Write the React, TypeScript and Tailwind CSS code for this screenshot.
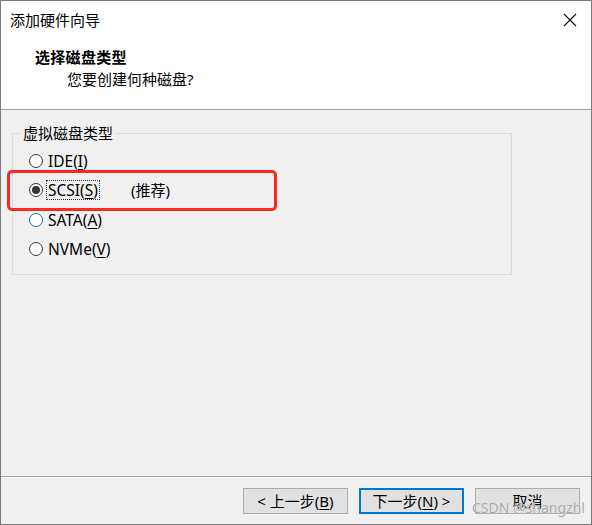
import React from "react";

const font = "font-['Segoe_UI','Noto_Sans','Noto_Sans_CJK_SC',sans-serif]";

function Radio({ checked, hover }: { checked?: boolean; hover?: boolean }) {
  return (
    <span
      className={`flex h-[14px] w-[14px] shrink-0 items-center justify-center rounded-full border bg-white ${
        hover ? "border-[#0078d7]" : "border-[#333333]"
      }`}
    >
      {checked && <span className="h-[8px] w-[8px] rounded-full bg-[#333333]" />}
    </span>
  );
}

function Option({
  label,
  hotkey,
  rest,
  checked,
  hover,
  focused,
  note,
}: {
  label: string;
  hotkey: string;
  rest: string;
  checked?: boolean;
  hover?: boolean;
  focused?: boolean;
  note?: string;
}) {
  return (
    <div className="flex h-[29.5px] items-center">
      <Radio checked={checked} hover={hover} />
      <span
        className={`ml-[4px] px-[1px] text-[15.5px] leading-[18px] ${focused ? "outline-1 outline-dotted outline-[#333]" : ""}`}
      >
        {label}
        <span className="underline underline-offset-2">{hotkey}</span>
        {rest}
      </span>
      {note && <span className="ml-[32px]">{note}</span>}
    </div>
  );
}

function Button({ children, primary }: { children: React.ReactNode; primary?: boolean }) {
  return (
    <button
      type="button"
      className={`flex h-[26px] w-[105px] items-center justify-center bg-[#e1e1e1] text-[15px] text-black ${
        primary ? "border-2 border-[#0078d7]" : "border border-[#adadad]"
      }`}
    >
      {children}
    </button>
  );
}

export default function App() {
  return (
    <div
      className={`relative flex h-[525px] w-[592px] flex-col border border-[#7a7a7a] bg-[#f0f0f0] text-[15px] text-black ${font}`}
    >
      <div className="h-[109px] border-b border-[#a0a0a0] bg-white">
        <div className="flex h-[38px] items-center justify-between pl-[9px] pr-[12px]">
          <span className="leading-[20px]">添加硬件向导</span>
          <svg width="14" height="14" viewBox="0 0 14 14" className="mr-[2px]">
            <path d="M1 1L13 13M13 1L1 13" stroke="#111" strokeWidth="1.1" />
          </svg>
        </div>
        <div className="ml-[34px] mt-[8px] font-bold leading-[20px] tracking-[0.3px]">选择磁盘类型</div>
        <div className="ml-[66px] mt-[2px] leading-[20px]">您要创建何种磁盘?</div>
      </div>

      <fieldset className="ml-[11px] mt-[13px] h-[152px] w-[500px] border border-[#dcdcdc] px-[16px]">
        <legend className="ml-[-8px] px-[2px] leading-[20px]">虚拟磁盘类型</legend>
        <div className="mt-[3px] flex flex-col">
          <Option label="IDE(" hotkey="I" rest=")" />
          <Option label="SCSI(" hotkey="S" rest=")" checked focused note="(推荐)" />
          <Option label="SATA(" hotkey="A" rest=")" hover />
          <Option label="NVMe(" hotkey="V" rest=")" />
        </div>
      </fieldset>

      <div className="mt-auto border-t border-[#a0a0a0]">
        <div className="flex h-[47px] items-start justify-end gap-[11px] border-t border-white pr-[11px] pt-[10px]">
          <Button>
            &lt; 上一步(<span className="underline underline-offset-2">B</span>)
          </Button>
          <Button primary>
            下一步(<span className="underline underline-offset-2">N</span>) &gt;
          </Button>
          <Button>取消</Button>
        </div>
      </div>

      <div className="pointer-events-none absolute left-[6px] top-[169px] h-[41px] w-[270px] rounded-[5px] border-[3px] border-[#fa2a20]" />

      <div className="pointer-events-none absolute left-[471px] top-[498px] text-[14px] leading-[18px] text-[#a8a8a8] [text-shadow:0_0_1px_#fff]">
        CSDN @shangzhl
      </div>
    </div>
  );
}
